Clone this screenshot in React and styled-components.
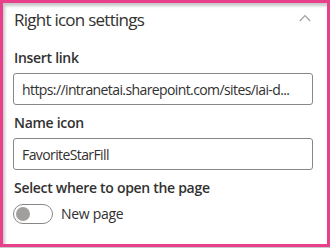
import React from "react";
import styled, { createGlobalStyle } from "styled-components";

const Global = createGlobalStyle`
  html, body { margin: 0; padding: 0; background: #c8c8c8; }
  body { width: 330px; height: 248px; overflow: hidden; }
  * { box-sizing: border-box; }
`;

const Frame = styled.div`
  width: 330px;
  height: 247px;
  border: 3px solid #e8408b;
  background: #ffffff;
  box-shadow: inset 2px 3px 3px rgba(0, 0, 0, 0.22);
  padding: 0 14px 0 10px;
  font-family: "Open Sans", "Noto Sans", sans-serif;
  color: #323130;
`;

const Header = styled.div`
  height: 40px;
  padding-top: 5px;
  display: flex;
  align-items: flex-start;
  justify-content: space-between;
`;

const Title = styled.div`
  font-size: 17px;
  line-height: 24px;
  font-weight: 400;
  letter-spacing: -0.75px;
  padding-left: 1px;
`;

const Chevron = styled.svg`
  margin-top: 6px;
  margin-right: 2px;
  width: 12px;
  height: 8px;
`;

const Field = styled.div`
  display: flex;
  flex-direction: column;
  margin-top: ${(p) => (p.$first ? 0 : 3)}px;
`;

const Label = styled.label`
  display: block;
  padding: 5px 0 5px 1px;
  font-size: 14px;
  line-height: 20px;
  font-weight: 600;
  letter-spacing: -0.3px;
`;

const Input = styled.input`
  width: 300px;
  height: 32px;
  border: 1px solid #8a8886;
  border-radius: 3px;
  padding: 0 8px;
  font-family: inherit;
  font-size: 14px;
  letter-spacing: -0.6px;
  color: #323130;
  background: #fff;
  outline: none;
`;

const ToggleRow = styled.div`
  display: flex;
  align-items: center;
  gap: 8px;
  margin-top: 1px;
`;

const Track = styled.div`
  width: 40px;
  height: 20px;
  border: 1px solid #8a8886;
  border-radius: 10px;
  display: flex;
  align-items: center;
  padding-left: 2px;
`;

const Knob = styled.div`
  width: 14px;
  height: 14px;
  border-radius: 50%;
  background: #a19f9d;
`;

const ToggleText = styled.span`
  font-size: 14px;
  line-height: 20px;
  letter-spacing: -0.3px;
`;

export default function App() {
  return (
    <>
      <Global />
      <Frame>
        <Header>
          <Title>Right icon settings</Title>
          <Chevron viewBox="0 0 12 8">
            <path d="M0.8 7 L6 1.6 L11.2 7" fill="none" stroke="#a19f9d" strokeWidth="1.1" />
          </Chevron>
        </Header>
        <Field $first>
          <Label>Insert link</Label>
          <Input readOnly defaultValue="https://intranetai.sharepoint.com/sites/iai-d..." />
        </Field>
        <Field>
          <Label>Name icon</Label>
          <Input readOnly defaultValue="FavoriteStarFill" />
        </Field>
        <Field>
          <Label>Select where to open the page</Label>
          <ToggleRow>
            <Track>
              <Knob />
            </Track>
            <ToggleText>New page</ToggleText>
          </ToggleRow>
        </Field>
      </Frame>
    </>
  );
}
